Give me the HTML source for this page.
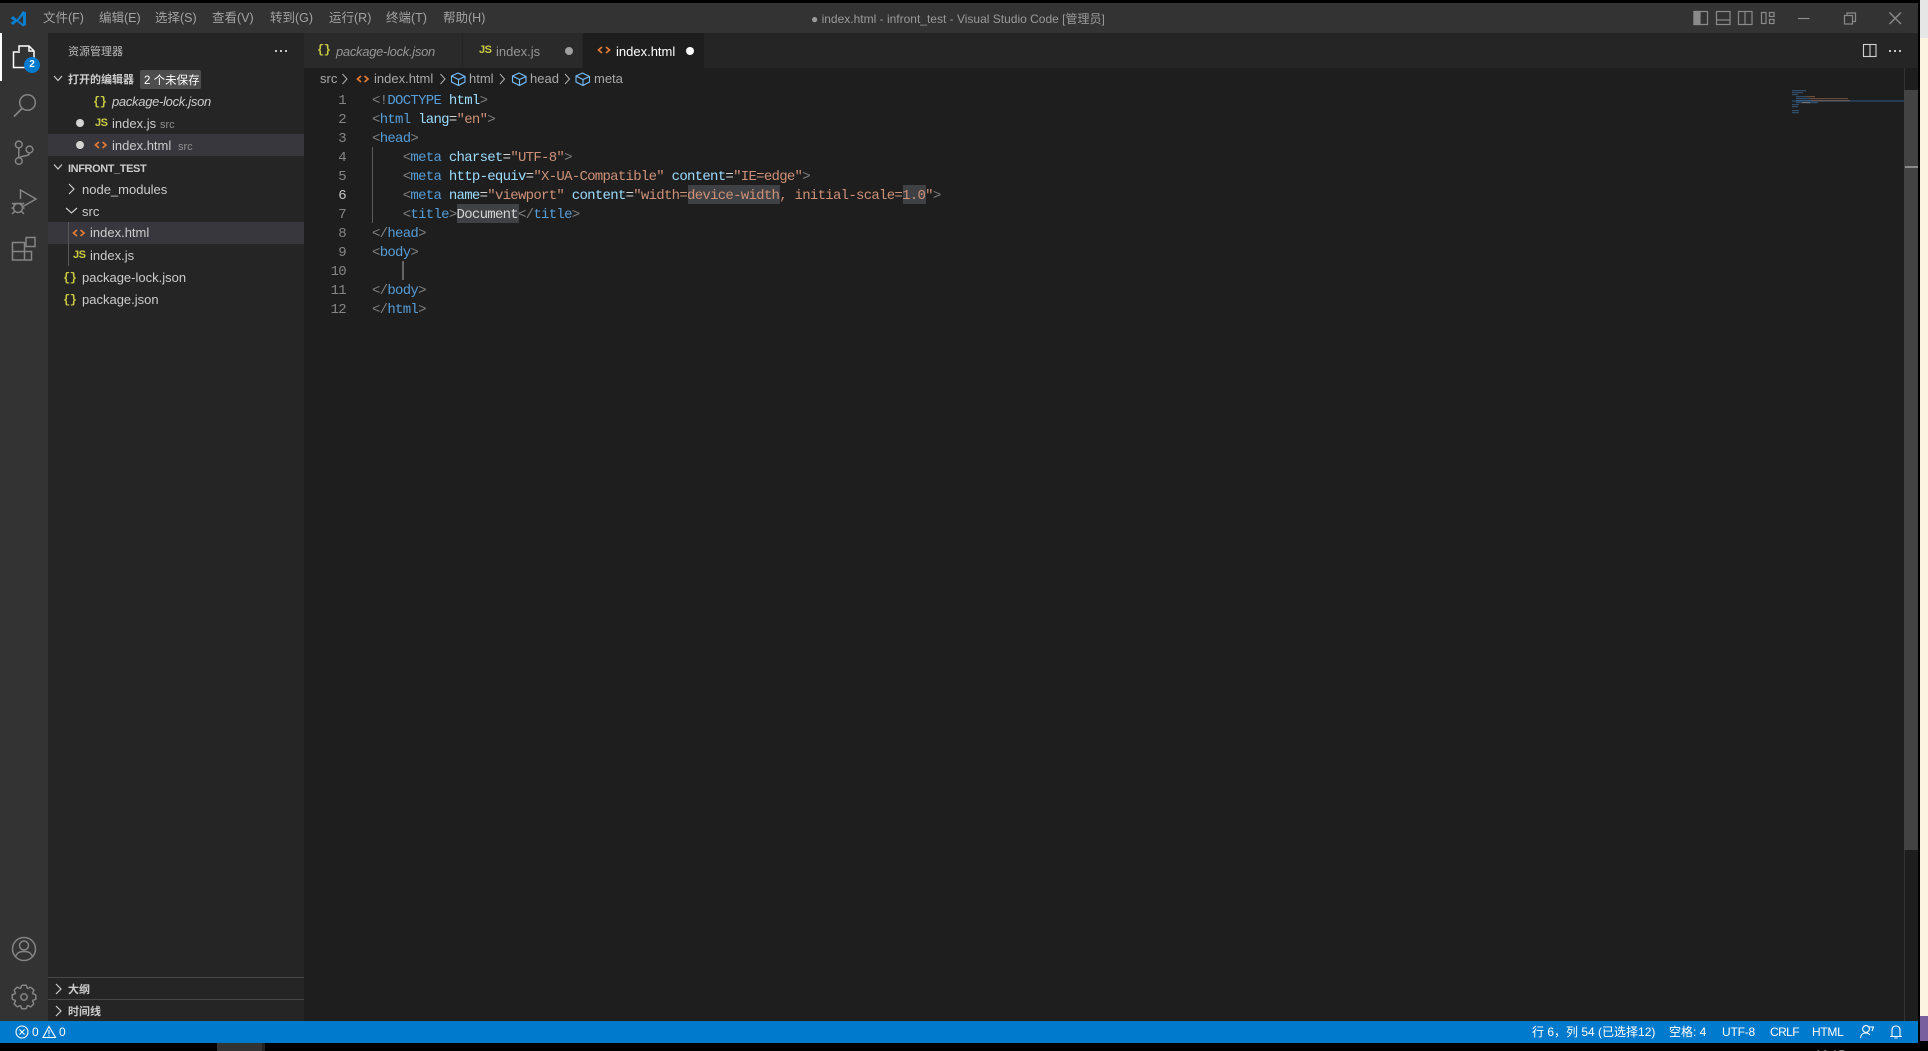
<!DOCTYPE html>
<html lang="zh"><head><meta charset="utf-8"><title>index.html - infront_test - Visual Studio Code</title>
<style>
*{box-sizing:border-box}
html,body{margin:0;padding:0;width:1928px;height:1051px;overflow:hidden;background:#000}
body{position:relative;font-family:"Liberation Sans","Noto Sans CJK SC",sans-serif;font-size:13px;color:#ccc}
.b{position:absolute}
.t{position:absolute;white-space:nowrap;line-height:22px;height:22px}
.m{color:#a3a3a3;font-size:12.5px;top:7px}
.side{color:#cccccc}
.h{font-size:11px;font-weight:bold;color:#cccccc}
.mute{color:#8f8f8f;font-size:11px}
.br{font-family:"Liberation Mono",monospace;font-weight:bold;color:#cbcb41;font-size:12px;letter-spacing:-.5px}
.js{font-weight:bold;color:#cbcb41;font-size:11px;letter-spacing:-.5px}
.bc{color:#a9a9a9;font-size:13px;top:68px}
.st{color:#fff;font-size:12px;top:1021px}
.c{position:absolute;left:372px;margin-top:2px;white-space:pre;font-family:"Liberation Mono",monospace;font-size:14px;letter-spacing:-.72px;line-height:19px;height:19px;color:#d4d4d4}
.n{position:absolute;left:299px;width:47px;margin-top:2px;text-align:right;font-family:"Liberation Mono",monospace;font-size:14px;letter-spacing:-.7px;line-height:19px;color:#858585}
.g{color:#808080}.k{color:#569cd6}.a{color:#9cdcfe}.v{color:#ce9178}
svg{position:absolute;overflow:visible;left:0;top:0}
</style></head><body>
<!-- desktop edges -->
<div class="b" style="left:1920px;top:0;width:8px;height:38px;background:#e6e6e6"></div>
<div class="b" style="left:1920px;top:38px;width:8px;height:978px;background:#fdf3e1"></div>
<div class="b" style="left:1920px;top:1016px;width:8px;height:25px;background:#7a5f9f"></div>
<div class="b" style="left:1920px;top:1041px;width:8px;height:10px;background:#000"></div>
<!-- window -->
<div class="b" style="left:0;top:3px;width:1918px;height:30px;background:#333333"></div>
<div class="b" style="left:0;top:33px;width:48px;height:988px;background:#333333"></div>
<div class="b" style="left:48px;top:33px;width:256px;height:988px;background:#252526"></div>
<div class="b" style="left:304px;top:33px;width:1614px;height:35px;background:#252526"></div>
<div class="b" style="left:304px;top:68px;width:1614px;height:953px;background:#1e1e1e"></div>
<div class="b" style="left:304px;top:33px;width:159px;height:35px;background:#2a2a2a;border-right:1px solid #252526"></div>
<div class="b" style="left:463px;top:33px;width:120px;height:35px;background:#2a2a2a;border-right:1px solid #252526"></div>
<div class="b" style="left:583px;top:33px;width:121px;height:35px;background:#1e1e1e"></div>
<div class="b" style="left:0;top:1021px;width:1918px;height:22px;background:#007acc"></div>
<div class="b" style="left:217px;top:1043px;width:45px;height:8px;background:#333"></div>
<div class="b" style="left:262px;top:1043px;width:3px;height:8px;background:#222"></div>
<!-- title -->
<svg width="1928" height="1051" style="pointer-events:none">
<path d="M10.5 18.5L13 16L17 19.5L23 11L26 12.5V25L23 26.5L17 21.5L13 25L10.5 23L14 20.5Z" fill="#0a7fd0"/>
<path d="M23 15.5L18.5 20.5L23 24Z" fill="#333"/>
<!-- layout icons -->
<g fill="none" stroke="#8a8a8a" stroke-width="1.2">
<rect x="1694" y="11.5" width="13.5" height="13"/><rect x="1694" y="11.5" width="6" height="13" fill="#8a8a8a"/>
<rect x="1716.5" y="11.5" width="13.5" height="13"/><path d="M1716.5 20H1730"/>
<rect x="1738.5" y="11.5" width="13.5" height="13"/><path d="M1745 11.5V24.5"/>
<rect x="1761.5" y="12.5" width="4.5" height="11"/><rect x="1769.5" y="12.5" width="4.5" height="4"/><rect x="1769.5" y="19.5" width="4.5" height="4"/>
<path d="M1798 18.5H1809.5"/>
<rect x="1844.5" y="15.5" width="8" height="8.5"/><path d="M1847 15V13H1855.5V21.5H1853"/>
<path d="M1889.5 12.5L1901 24M1901 12.5L1889.5 24" stroke-width="1.4"/>
</g>
<!-- split, more -->
<g fill="none" stroke="#d0d0d0" stroke-width="1.1"><rect x="1863.5" y="44.5" width="12.5" height="12"/><path d="M1870 44.5V56.5"/></g>
<g fill="#c5c5c5"><rect x="1889" y="50" width="2" height="2"/><rect x="1894" y="50" width="2" height="2"/><rect x="1899" y="50" width="2" height="2"/>
<rect x="275" y="50" width="2" height="2"/><rect x="280" y="50" width="2" height="2"/><rect x="285" y="50" width="2" height="2"/></g>
<!-- activity bar -->
<rect x="0" y="33" width="2" height="48" fill="#fff"/>
<g fill="none" stroke="#fff" stroke-width="1.5">
<path d="M19 51V46H29L34 51V63H28"/><path d="M29 46V51H34"/><path d="M20 52H13.5V67.5H26V61"/>
</g>
<circle cx="32" cy="65" r="8" fill="#007acc"/>
<g fill="none" stroke="#858585" stroke-width="1.5">
<circle cx="27.5" cy="102.5" r="7.8"/><path d="M22 108.5L14 116.5" stroke-width="1.8"/>
<circle cx="18.8" cy="144.5" r="3.4"/><circle cx="18.8" cy="161" r="3.4"/><circle cx="29.5" cy="149.5" r="3.4"/>
<path d="M18.8 148V157.5M29.5 153C29.5 157 21 155 19.5 158"/>
<path d="M20.5 199V190L36 199L22 207"/>
<circle cx="18" cy="208" r="4.5"/><path d="M12 203L15 205M24 203L21 205M11.5 208H13.5M22.5 208H24.5M12 214L15 211M24 214L21 211M14 203.5H22"/>
<path d="M12.5 242.5H24.5V260H12.5ZM12.5 251.5H31.5V260H24.5"/><rect x="26" y="237.5" width="9" height="9"/>
<circle cx="24" cy="949" r="11.5"/><circle cx="24" cy="945.5" r="4.5"/><path d="M15.5 957C17 952 20.5 951.5 24 951.5C27.5 951.5 31 952 32.5 957"/>
<g transform="translate(24 997)"><circle r="3.2"/>
<path d="M-2.2-11.8L2.2-11.8L3.3-8.9L3.96-8.63L6.79-9.9"/>
<path transform="rotate(45)" d="M-2.2-11.8L2.2-11.8L3.3-8.9L3.96-8.63L6.79-9.9"/>
<path transform="rotate(90)" d="M-2.2-11.8L2.2-11.8L3.3-8.9L3.96-8.63L6.79-9.9"/>
<path transform="rotate(135)" d="M-2.2-11.8L2.2-11.8L3.3-8.9L3.96-8.63L6.79-9.9"/>
<path transform="rotate(180)" d="M-2.2-11.8L2.2-11.8L3.3-8.9L3.96-8.63L6.79-9.9"/>
<path transform="rotate(225)" d="M-2.2-11.8L2.2-11.8L3.3-8.9L3.96-8.63L6.79-9.9"/>
<path transform="rotate(270)" d="M-2.2-11.8L2.2-11.8L3.3-8.9L3.96-8.63L6.79-9.9"/>
<path transform="rotate(315)" d="M-2.2-11.8L2.2-11.8L3.3-8.9L3.96-8.63L6.79-9.9"/>
</g></g>
</svg>
<span class="t" style="left:28px;top:54px;width:8px;text-align:center;color:#fff;font-size:10px;font-weight:bold">2</span>
<span class="t m" style="left:43px">文件(F)</span><span class="t m" style="left:99px">编辑(E)</span><span class="t m" style="left:155px">选择(S)</span><span class="t m" style="left:212px">查看(V)</span><span class="t m" style="left:270px">转到(G)</span><span class="t m" style="left:329px">运行(R)</span><span class="t m" style="left:386px">终端(T)</span><span class="t m" style="left:443px">帮助(H)</span>
<span class="t" style="left:811px;top:8px;color:#9a9a9a;font-size:12px">● index.html - infront_test - Visual Studio Code [管理员]</span>
<!-- row highlights -->
<div class="b" style="left:48px;top:134px;width:256px;height:22px;background:#37373d"></div>
<div class="b" style="left:48px;top:222px;width:256px;height:22px;background:#37373d"></div>
<div class="b" style="left:68px;top:222px;width:1px;height:44px;background:#585858"></div>
<div class="b" style="left:48px;top:977px;width:256px;height:1px;background:#484848"></div>
<div class="b" style="left:48px;top:999px;width:256px;height:1px;background:#484848"></div>
<div class="b" style="left:140px;top:70px;width:61px;height:19px;background:#4d4d4d;border-radius:2px"></div>
<!-- sidebar text -->
<span class="t" style="left:68px;top:41px;font-size:11px;color:#bbb">资源管理器</span>
<span class="t h" style="left:68px;top:69px">打开的编辑器</span>
<span class="t" style="left:144px;top:70px;font-size:11.5px;color:#fff">2 个未保存</span>
<span class="t br" style="left:93px;top:91px">{}</span><span class="t" style="left:112px;top:91px;font-style:italic;letter-spacing:-.3px">package-lock.json</span>
<span class="t js" style="left:95px;top:112px">JS</span><span class="t" style="left:112px;top:113px">index.js</span><span class="t mute" style="left:160px;top:114px">src</span>
<span class="t" style="left:112px;top:135px">index.html</span><span class="t mute" style="left:178px;top:136px">src</span>
<span class="t h" style="left:68px;top:158px;letter-spacing:-.4px">INFRONT_TEST</span>
<span class="t" style="left:82px;top:179px">node_modules</span>
<span class="t" style="left:82px;top:201px">src</span>
<span class="t" style="left:90px;top:222px">index.html</span>
<span class="t js" style="left:73px;top:244px">JS</span><span class="t" style="left:90px;top:245px">index.js</span>
<span class="t br" style="left:63px;top:267px">{}</span><span class="t" style="left:82px;top:267px">package-lock.json</span>
<span class="t br" style="left:63px;top:289px">{}</span><span class="t" style="left:82px;top:289px">package.json</span>
<span class="t h" style="left:68px;top:979px">大纲</span>
<span class="t h" style="left:68px;top:1001px">时间线</span>
<!-- tab text -->
<span class="t br" style="left:317px;top:39px">{}</span><span class="t" style="left:336px;top:41px;font-style:italic;color:#969696;letter-spacing:-.3px">package-lock.json</span>
<span class="t js" style="left:479px;top:39px">JS</span><span class="t" style="left:496px;top:41px;color:#969696">index.js</span>
<span class="t" style="left:616px;top:41px;color:#fff">index.html</span>
<!-- breadcrumbs -->
<span class="t bc" style="left:320px">src</span><span class="t bc" style="left:374px">index.html</span><span class="t bc" style="left:469px">html</span><span class="t bc" style="left:530px">head</span><span class="t bc" style="left:594px">meta</span>
<!-- code highlights -->
<div class="b" style="left:688px;top:185px;width:92px;height:19px;background:#3f4144"></div>
<div class="b" style="left:903px;top:185px;width:23px;height:19px;background:#3f4144"></div>
<div class="b" style="left:457px;top:204px;width:62px;height:19px;background:#3f4144"></div>
<div class="b" style="left:372px;top:147px;width:1px;height:76px;background:#5a5a5a"></div>
<div class="b" style="left:402px;top:261px;width:2px;height:19px;background:#666"></div>
<!-- code -->
<div class="n" style="top:90px">1</div><div class="n" style="top:109px">2</div><div class="n" style="top:128px">3</div><div class="n" style="top:147px">4</div><div class="n" style="top:166px">5</div><div class="n" style="top:185px;color:#c6c6c6">6</div><div class="n" style="top:204px">7</div><div class="n" style="top:223px">8</div><div class="n" style="top:242px">9</div><div class="n" style="top:261px">10</div><div class="n" style="top:280px">11</div><div class="n" style="top:299px">12</div>
<div class="c" style="top:90px"><span class="g">&lt;!</span><span class="k">DOCTYPE</span> <span class="a">html</span><span class="g">&gt;</span></div>
<div class="c" style="top:109px"><span class="g">&lt;</span><span class="k">html</span> <span class="a">lang</span>=<span class="v">"en"</span><span class="g">&gt;</span></div>
<div class="c" style="top:128px"><span class="g">&lt;</span><span class="k">head</span><span class="g">&gt;</span></div>
<div class="c" style="top:147px">    <span class="g">&lt;</span><span class="k">meta</span> <span class="a">charset</span>=<span class="v">"UTF-8"</span><span class="g">&gt;</span></div>
<div class="c" style="top:166px">    <span class="g">&lt;</span><span class="k">meta</span> <span class="a">http-equiv</span>=<span class="v">"X-UA-Compatible"</span> <span class="a">content</span>=<span class="v">"IE=edge"</span><span class="g">&gt;</span></div>
<div class="c" style="top:185px">    <span class="g">&lt;</span><span class="k">meta</span> <span class="a">name</span>=<span class="v">"viewport"</span> <span class="a">content</span>=<span class="v">"width=device-width, initial-scale=1.0"</span><span class="g">&gt;</span></div>
<div class="c" style="top:204px">    <span class="g">&lt;</span><span class="k">title</span><span class="g">&gt;</span>Document<span class="g">&lt;/</span><span class="k">title</span><span class="g">&gt;</span></div>
<div class="c" style="top:223px"><span class="g">&lt;/</span><span class="k">head</span><span class="g">&gt;</span></div>
<div class="c" style="top:242px"><span class="g">&lt;</span><span class="k">body</span><span class="g">&gt;</span></div>
<div class="c" style="top:280px"><span class="g">&lt;/</span><span class="k">body</span><span class="g">&gt;</span></div>
<div class="c" style="top:299px"><span class="g">&lt;/</span><span class="k">html</span><span class="g">&gt;</span></div>
<!-- status -->
<span class="t st" style="left:32px">0</span><span class="t st" style="left:59px">0</span>
<span class="t st" style="left:1532px">行 6，列 54 (已选择12)</span><span class="t st" style="left:1669px">空格: 4</span><span class="t st" style="left:1722px;letter-spacing:-.2px">UTF-8</span><span class="t st" style="left:1770px;letter-spacing:-.6px">CRLF</span><span class="t st" style="left:1812px;letter-spacing:-.3px">HTML</span>
<span class="t" style="left:1815px;top:1044px;color:#eee;font-size:12px">16:15</span>
<!-- overlay icons -->
<svg width="1928" height="1051">
<g fill="none" stroke="#e37933" stroke-width="1.7">
<path d="M99 142L95.5 145L99 148M102.5 142L106 145L102.5 148"/>
<path d="M77 230L73.5 233L77 236M80.5 230L84 233L80.5 236"/>
<path d="M602 47L598.5 50L602 53M606 47L609.5 50L606 53"/>
<path d="M361 76L357.5 79L361 82M364.5 76L368 79L364.5 82"/>
</g>
<circle cx="80" cy="123" r="4" fill="#d4d4d4"/><circle cx="80" cy="145" r="4" fill="#d4d4d4"/>
<circle cx="569" cy="51" r="4" fill="#9f9f9f"/><circle cx="690" cy="51" r="4" fill="#fff"/>
<g fill="none" stroke="#cccccc" stroke-width="1.2">
<path d="M54 76L58 80.5L62 76M54 164.5L58 169L62 164.5M66 208L71.5 213L77 208M69 184L74 189L69 194M56 984L61 989L56 994M56 1006L61 1011L56 1016"/>
</g>
<g fill="none" stroke="#a9a9a9" stroke-width="1.1"><path d="M342.5 74L347 79L342.5 84M440.5 74L445 79L440.5 84M500 74L504.5 79L500 84M565 74L569.5 79L565 84"/></g>
<g fill="none" stroke="#75beff" stroke-width="1.1">
<path d="M451.5 76L458 73L465 76.5V82L458.5 85.5L451.5 82ZM451.5 76L458.5 79.5L465 76.5M458.5 79.5V85.5"/>
<path d="M512.5 76L519 73L526 76.5V82L519.5 85.5L512.5 82ZM512.5 76L519.5 79.5L526 76.5M519.5 79.5V85.5"/>
<path d="M576 76L582.5 73L589.5 76.5V82L583 85.5L576 82ZM576 76L583 79.5L589.5 76.5M583 79.5V85.5"/>
</g>
<g fill="none" stroke="#fff" stroke-width="1.1">
<circle cx="22" cy="1032" r="6"/><path d="M19.5 1029.5L24.5 1034.5M24.5 1029.5L19.5 1034.5"/>
<path d="M49 1026.5L55.5 1037.5H43ZM49 1030V1034M49 1035.2V1036.4"/>
<circle cx="1866" cy="1029" r="3.4"/><path d="M1860.5 1038C1861 1034 1863 1033 1866 1033C1868 1033 1869 1033.5 1870 1035M1869 1027H1873.5L1872 1031"/>
<path d="M1892 1036V1030.5C1892 1027.5 1893.5 1026 1896 1026C1898.5 1026 1900 1027.5 1900 1030.5V1036M1890 1036.5H1902M1894.5 1038H1897.5"/>
</g>
<!-- minimap -->
<rect x="1792" y="100" width="112" height="2" fill="#264f78" opacity=".6"/>
<g opacity=".6">
<g fill="#3f6f9c">
<rect x="1792" y="90" width="14" height="1.2"/><rect x="1792" y="92" width="11" height="1.2"/><rect x="1792" y="94" width="6" height="1.2"/>
<rect x="1796" y="96" width="10" height="1.2"/><rect x="1796" y="98" width="14" height="1.2"/><rect x="1796" y="100" width="16" height="1.2"/>
<rect x="1796" y="102" width="6" height="1.2"/><rect x="1808" y="102" width="10" height="1.2"/>
<rect x="1792" y="104" width="7" height="1.2"/><rect x="1792" y="106" width="6" height="1.2"/><rect x="1792" y="110" width="7" height="1.2"/><rect x="1792" y="112" width="7" height="1.2"/></g>
<g fill="#9c6a50"><rect x="1806" y="96" width="9" height="1.2"/><rect x="1810" y="98" width="38" height="1.2"/><rect x="1812" y="100" width="38" height="1.2"/></g>
<rect x="1802" y="102" width="8" height="1.2" fill="#aaa"/></g>
<!-- scrollbar -->
<rect x="1904" y="68" width="1" height="953" fill="#333"/>
<rect x="1904" y="90" width="14" height="760" fill="#434343"/>
<rect x="1905" y="166" width="13" height="2" fill="#8a8a8a"/>
</svg>
</body></html>
